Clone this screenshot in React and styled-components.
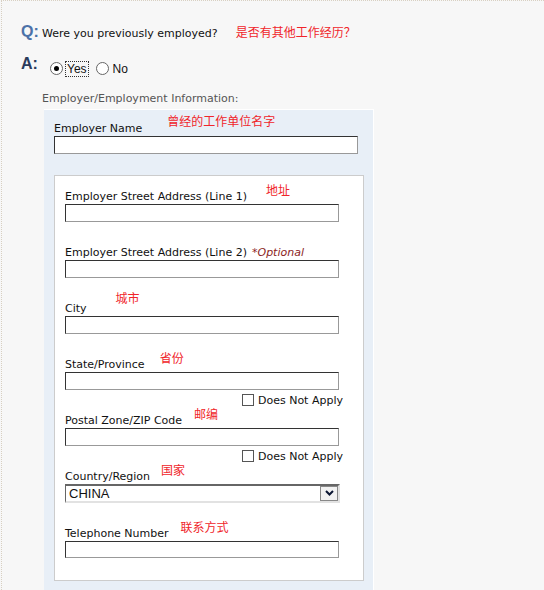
import styled, { createGlobalStyle } from "styled-components";

const GlobalStyle = createGlobalStyle`
  html, body {
    margin: 0;
    padding: 0;
    background: #f7f7f7;
  }
  body {
    font-family: "DejaVu Sans", Verdana, sans-serif;
    font-size: 11px;
    color: #111;
  }
`;

const Page = styled.div`
  margin-left: 1px;
  height: 590px;
  border-top: 1px dotted #d8d0c2;
  border-left: 1px dotted #d8d0c2;
  padding: 22px 0 0 19px;
  box-sizing: border-box;
  overflow: hidden;
`;

const QARow = styled.div`
  display: flex;
  align-items: baseline;
  margin-bottom: ${(p) => p.$mb || 0}px;
`;

const Tag = styled.span`
  font-family: "Liberation Sans", Arial, sans-serif;
  font-size: 16px;
  font-weight: bold;
  color: ${(p) => p.$color};
  width: 21px;
`;

const Question = styled.span`
  font-size: 11px;
  color: #111;
`;

const Note = styled.span`
  font-family: "Noto Sans CJK SC", sans-serif;
  font-size: 12px;
  color: #f0252a;
  margin-left: ${(p) => p.$ml || 0}px;
  margin-bottom: ${(p) => p.$up || 0}px;
  line-height: 14px;
`;

const Options = styled.div`
  display: flex;
  align-items: center;
  margin-left: 8px;
  position: relative;
  top: 2px;
`;

const Radio = styled.span`
  width: 11px;
  height: 11px;
  border-radius: 50%;
  border: 1px solid #666;
  background: #fff;
  display: inline-flex;
  align-items: center;
  justify-content: center;
  &::after {
    content: "";
    width: 5px;
    height: 5px;
    border-radius: 50%;
    background: ${(p) => (p.$on ? "#000" : "transparent")};
  }
`;

const OptionText = styled.span`
  font-family: "Liberation Sans", Arial, sans-serif;
  font-size: 12px;
  color: #111;
  margin: 0 7px 0 2px;
  padding: 0 1px;
  border: 1px dotted ${(p) => (p.$focus ? "#333" : "transparent")};
`;

const SectionTitle = styled.div`
  color: #555;
  margin: 17px 0 4px 21px;
`;

const Panel = styled.div`
  margin-left: 23px;
  width: 330px;
  background: #e8eff7;
  border-top: 1px solid #fff;
  border-right: 1px solid #fff;
  padding: 1px 0 20px 10px;
  box-sizing: border-box;
  height: 500px;
`;

const LabelRow = styled.div`
  display: flex;
  align-items: flex-end;
  height: ${(p) => p.$h || 13}px;
  line-height: 13px;
  white-space: nowrap;
`;

const Optional = styled.span`
  font-style: italic;
  color: #8b1d1d;
  margin-left: 5px;
`;

const TextInput = styled.div`
  width: ${(p) => p.$w}px;
  height: 18px;
  box-sizing: border-box;
  margin-top: 1px;
  background: #fff;
  border: 1px solid;
  border-color: #333 #999 #999 #333;
`;

const InnerBox = styled.div`
  margin-top: 21px;
  width: 310px;
  background: #fff;
  border: 1px solid #cccccc;
  box-sizing: border-box;
  padding: 0 0 22px 10px;
`;

const Field = styled.div`
  height: ${(p) => p.$h || 56}px;
  display: flex;
  flex-direction: column;
`;

const CheckRow = styled.div`
  display: flex;
  align-items: center;
  justify-content: flex-end;
  width: 278px;
  margin-top: 4px;
`;

const CheckBox = styled.span`
  width: 12px;
  height: 12px;
  box-sizing: border-box;
  border: 1px solid #555;
  background: #fff;
  margin-right: 4px;
`;

const CheckText = styled.span`
  font-size: 11px;
  color: #111;
`;

const Select = styled.div`
  width: 275px;
  height: 19px;
  margin-top: 1px;
  box-sizing: border-box;
  background: #fff;
  border-top: 2px solid #666;
  border-left: 1px solid #666;
  border-bottom: 2px solid #e2e2e2;
  border-right: 2px solid #e2e2e2;
  display: flex;
  align-items: center;
  justify-content: space-between;
  padding-left: 3px;
  font-family: "Liberation Sans", Arial, sans-serif;
  font-size: 13px;
  color: #111;
`;

const SelectButton = styled.span`
  width: 18px;
  height: 15px;
  box-sizing: border-box;
  background: #f2f2f2;
  border: 1px solid #888;
  display: flex;
  align-items: center;
  justify-content: center;
`;

const Chevron = () => (
  <svg width="9" height="6" viewBox="0 0 9 6">
    <path d="M1 1 L4.5 4.5 L8 1" stroke="#0b1633" strokeWidth="2" fill="none" />
  </svg>
);

const NotApply = () => (
  <CheckRow>
    <CheckBox />
    <CheckText>Does Not Apply</CheckText>
  </CheckRow>
);

export default function App() {
  return (
    <>
      <GlobalStyle />
      <Page>
        <QARow $mb={14}>
          <Tag $color="#4c72a8">Q:</Tag>
          <Question>Were you previously employed?</Question>
          <Note $ml={18}>是否有其他工作经历？</Note>
        </QARow>
        <QARow>
          <Tag $color="#2b3b5c">A:</Tag>
          <Options>
            <Radio $on />
            <OptionText $focus>Yes</OptionText>
            <Radio />
            <OptionText>No</OptionText>
          </Options>
        </QARow>

        <SectionTitle>Employer/Employment Information:</SectionTitle>
        <Panel>
          <LabelRow $h={24}>
            Employer Name
            <Note $ml={25} $up={7}>曾经的工作单位名字</Note>
          </LabelRow>
          <TextInput $w={304} />

          <InnerBox>
            <Field $h={70}>
              <LabelRow $h={27}>
                Employer Street Address (Line 1)
                <Note $ml={19} $up={6}>地址</Note>
              </LabelRow>
              <TextInput $w={274} />
            </Field>
            <Field>
              <LabelRow>
                Employer Street Address (Line 2)
                <Optional>*Optional</Optional>
              </LabelRow>
              <TextInput $w={274} />
            </Field>
            <Field>
              <LabelRow>
                City
                <Note $ml={29} $up={10}>城市</Note>
              </LabelRow>
              <TextInput $w={274} />
            </Field>
            <Field>
              <LabelRow>
                State/Province
                <Note $ml={15} $up={6}>省份</Note>
              </LabelRow>
              <TextInput $w={274} />
              <NotApply />
            </Field>
            <Field>
              <LabelRow>
                Postal Zone/ZIP Code
                <Note $ml={12} $up={6}>邮编</Note>
              </LabelRow>
              <TextInput $w={274} />
              <NotApply />
            </Field>
            <Field $h={57}>
              <LabelRow>
                Country/Region
                <Note $ml={11} $up={6}>国家</Note>
              </LabelRow>
              <Select>
                CHINA
                <SelectButton>
                  <Chevron />
                </SelectButton>
              </Select>
            </Field>
            <Field $h={31}>
              <LabelRow>
                Telephone Number
                <Note $ml={12} $up={6}>联系方式</Note>
              </LabelRow>
              <TextInput $w={274} />
            </Field>
          </InnerBox>
        </Panel>
      </Page>
    </>
  );
}
